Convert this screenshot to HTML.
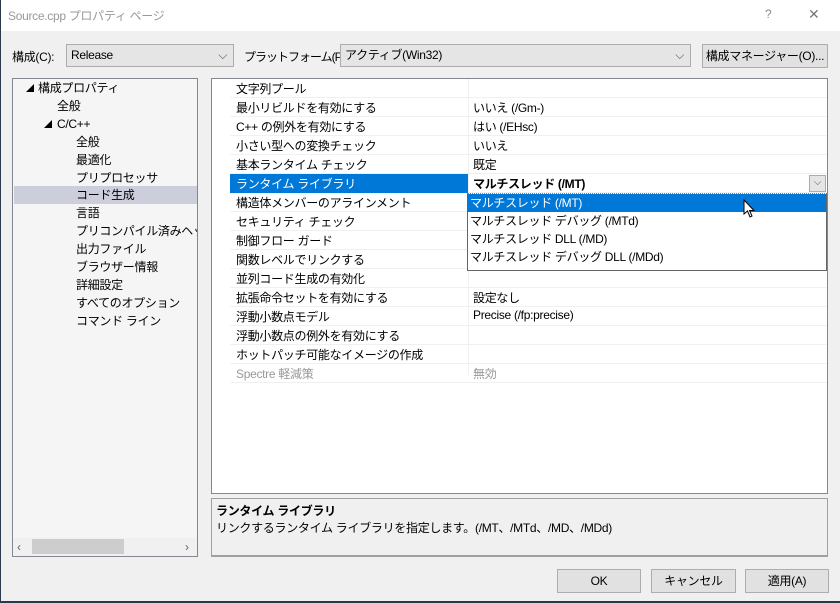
<!DOCTYPE html><html><head><meta charset="utf-8"><style>
*{box-sizing:border-box;margin:0;padding:0}
body{width:840px;height:603px;overflow:hidden;background:#f0f0f0;font-family:"Liberation Sans","Noto Sans CJK JP",sans-serif;font-size:12px;color:#000;position:relative;letter-spacing:-0.3px}
.a{position:absolute;white-space:nowrap}
.title{left:0;top:0;width:840px;height:31px;background:#fff}
.combo{background:#e5e5e5;border:1px solid #acacac;height:23px;line-height:21px;padding-left:4px}
.btn{background:#e1e1e1;border:1px solid #adadad;height:24px;line-height:22px;text-align:center}
.grid{left:211px;top:78px;width:617px;height:416px;background:#fff;border:1px solid #828790}
.row{position:absolute;left:18px;width:597px;height:19px;border-bottom:1px solid #f0f0f0}
.row span{position:absolute;top:1px}
.n{left:6px}.v{left:243px}
.vl{position:absolute;left:256px;top:0;width:1px;height:296px;background:#f0f0f0}
.tree{left:12px;top:78px;width:186px;height:479px;background:#f5f5f5;border:1px solid #828790;overflow:hidden}
.ti{position:absolute;height:18px;line-height:18px}
.dd{left:467px;top:193px;width:360px;height:78px;background:#fff;border:1px solid #646464;border-top:1px dotted #d07020}
.dd div{height:18px;line-height:18px;padding-left:2px}
</style></head><body>
<div class="a title"></div>
<div class="a" style="left:8px;top:7px;color:#999;font-size:12px">Source.cpp プロパティ ページ</div>
<div class="a" style="left:765px;top:7px;color:#888">?</div>
<div class="a" style="left:808px;top:6px;color:#777;font-size:14px">✕</div>
<div class="a" style="left:12px;top:48px">構成(C):</div>
<div class="a combo" style="left:66px;top:44px;width:168px">Release<span style="position:absolute;right:6px;color:#555">⌵</span></div>
<div class="a" style="left:244px;top:48px;letter-spacing:-1px">プラットフォーム(P):</div>
<div class="a combo" style="left:340px;top:44px;width:351px">アクティブ(Win32)<span style="position:absolute;right:6px;color:#555">⌵</span></div>
<div class="a btn" style="left:702px;top:44px;width:126px">構成マネージャー(O)...</div>

<div class="a tree">
<div class="ti" style="left:13px;top:1px;font-size:8px">◢</div>
<div class="ti" style="left:25px;top:0">構成プロパティ</div>
<div class="ti" style="left:44px;top:18px">全般</div>
<div class="ti" style="left:31px;top:37px;font-size:8px">◢</div>
<div class="ti" style="left:44px;top:36px">C/C++</div>
<div class="ti" style="left:63px;top:54px">全般</div>
<div class="ti" style="left:63px;top:72px">最適化</div>
<div class="ti" style="left:63px;top:90px">プリプロセッサ</div>
<div class="ti" style="left:1px;top:107px;width:183px;background:#cccedb"></div>
<div class="ti" style="left:63px;top:107px">コード生成</div>
<div class="ti" style="left:63px;top:125px">言語</div>
<div class="ti" style="left:63px;top:143px">プリコンパイル済みヘッダー</div>
<div class="ti" style="left:63px;top:161px">出力ファイル</div>
<div class="ti" style="left:63px;top:179px">ブラウザー情報</div>
<div class="ti" style="left:63px;top:197px">詳細設定</div>
<div class="ti" style="left:63px;top:215px">すべてのオプション</div>
<div class="ti" style="left:63px;top:233px">コマンド ライン</div>
<div style="position:absolute;left:0;top:459px;width:184px;height:18px;background:#f0f0f0"></div>
<div style="position:absolute;left:19px;top:460px;width:92px;height:15px;background:#cdcdcd"></div>
<div class="ti" style="left:4px;top:459px;color:#606060">‹</div>
<div class="ti" style="left:172px;top:459px;color:#606060">›</div>
</div>

<div class="a grid">
<div class="vl"></div>
<div class="row" style="top:0"><span class="n">文字列プール</span></div>
<div class="row" style="top:19px"><span class="n">最小リビルドを有効にする</span><span class="v">いいえ (/Gm-)</span></div>
<div class="row" style="top:38px"><span class="n">C++ の例外を有効にする</span><span class="v">はい (/EHsc)</span></div>
<div class="row" style="top:57px"><span class="n">小さい型への変換チェック</span><span class="v">いいえ</span></div>
<div class="row" style="top:76px"><span class="n">基本ランタイム チェック</span><span class="v">既定</span></div>
<div class="row" style="top:95px"><div style="position:absolute;left:0;top:0;width:238px;height:19px;background:#0078d7"></div><span class="n" style="color:#fff">ランタイム ライブラリ</span><span class="v" style="font-weight:bold">マルチスレッド (/MT)</span><div style="position:absolute;left:579px;top:1px;width:17px;height:17px;background:#e5e5e5;border:1px solid #acacac;text-align:center;line-height:14px;color:#555;font-size:10px">⌵</div></div>
<div class="row" style="top:114px"><span class="n">構造体メンバーのアラインメント</span></div>
<div class="row" style="top:133px"><span class="n">セキュリティ チェック</span></div>
<div class="row" style="top:152px"><span class="n">制御フロー ガード</span></div>
<div class="row" style="top:171px"><span class="n">関数レベルでリンクする</span></div>
<div class="row" style="top:190px"><span class="n">並列コード生成の有効化</span></div>
<div class="row" style="top:209px"><span class="n">拡張命令セットを有効にする</span><span class="v">設定なし</span></div>
<div class="row" style="top:228px"><span class="n">浮動小数点モデル</span><span class="v">Precise (/fp:precise)</span></div>
<div class="row" style="top:247px"><span class="n">浮動小数点の例外を有効にする</span></div>
<div class="row" style="top:266px"><span class="n">ホットパッチ可能なイメージの作成</span></div>
<div class="row" style="top:285px;color:#999"><span class="n">Spectre 軽減策</span><span class="v">無効</span></div>
</div>

<div class="a dd">
<div style="background:#0078d7;color:#fff">マルチスレッド (/MT)</div>
<div>マルチスレッド デバッグ (/MTd)</div>
<div>マルチスレッド DLL (/MD)</div>
<div>マルチスレッド デバッグ DLL (/MDd)</div>
</div>
<svg class="a" style="left:743px;top:199px" width="14" height="20" viewBox="0 0 14 20"><path d="M1 1 L1 15 L4.5 12 L7 18 L9 17 L6.5 11.5 L11 11.5 Z" fill="#fff" stroke="#000" stroke-width="1"/></svg>

<div class="a" style="left:211px;top:498px;width:617px;height:59px;border:1px solid #a0a0a0;border-bottom:2px solid #a0a0a0;background:#f0f0f0"></div>
<div class="a" style="left:216px;top:502px;font-weight:bold">ランタイム ライブラリ</div>
<div class="a" style="left:216px;top:519px">リンクするランタイム ライブラリを指定します。(/MT、/MTd、/MD、/MDd)</div>

<div class="a btn" style="left:557px;top:569px;width:84px">OK</div>
<div class="a btn" style="left:651px;top:569px;width:85px">キャンセル</div>
<div class="a btn" style="left:745px;top:569px;width:84px">適用(A)</div>
<div class="a" style="left:0;top:0;width:1px;height:603px;background:#2b3a4a"></div>
<div class="a" style="left:0;top:601px;width:840px;height:2px;background:#2b3a4a"></div>
</body></html>
